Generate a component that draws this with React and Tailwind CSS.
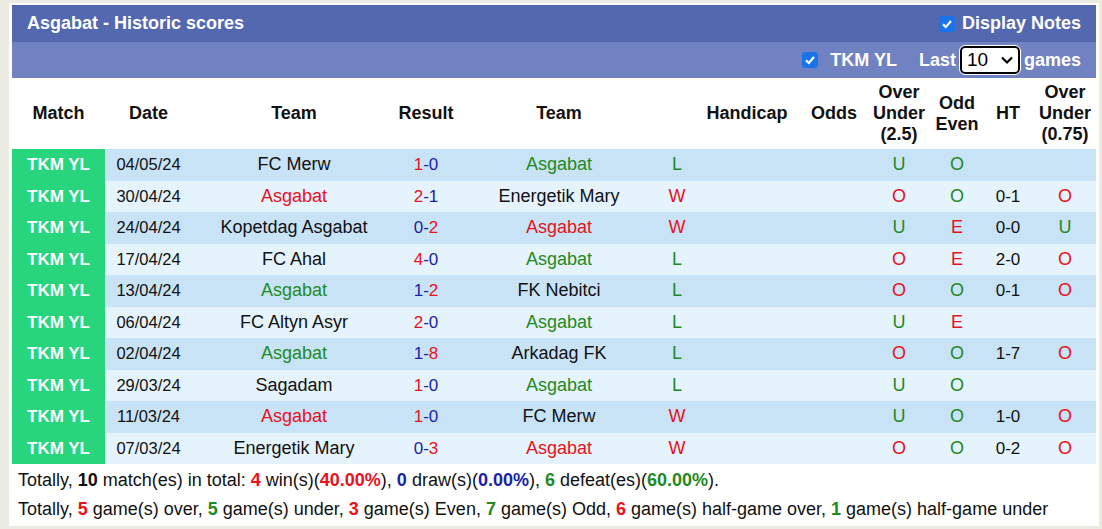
import React from 'react';

const RED = 'text-[#e8121c]';
const GREEN = 'text-[#1f8a24]';
const BLUE = 'text-[#1a22a8]';

// [date, home, homeColor, hs, as, away, awayColor, res, ou, oe, ht, ou2]
const rows = [
  ['04/05/24', 'FC Merw', 'k', 1, 0, 'Asgabat', 'g', 'L', 'U', 'O', '', ''],
  ['30/04/24', 'Asgabat', 'r', 2, 1, 'Energetik Mary', 'k', 'W', 'O', 'O', '0-1', 'O'],
  ['24/04/24', 'Kopetdag Asgabat', 'k', 0, 2, 'Asgabat', 'r', 'W', 'U', 'E', '0-0', 'U'],
  ['17/04/24', 'FC Ahal', 'k', 4, 0, 'Asgabat', 'g', 'L', 'O', 'E', '2-0', 'O'],
  ['13/04/24', 'Asgabat', 'g', 1, 2, 'FK Nebitci', 'k', 'L', 'O', 'O', '0-1', 'O'],
  ['06/04/24', 'FC Altyn Asyr', 'k', 2, 0, 'Asgabat', 'g', 'L', 'U', 'E', '', ''],
  ['02/04/24', 'Asgabat', 'g', 1, 8, 'Arkadag FK', 'k', 'L', 'O', 'O', '1-7', 'O'],
  ['29/03/24', 'Sagadam', 'k', 1, 0, 'Asgabat', 'g', 'L', 'U', 'O', '', ''],
  ['11/03/24', 'Asgabat', 'r', 1, 0, 'FC Merw', 'k', 'W', 'U', 'O', '1-0', 'O'],
  ['07/03/24', 'Energetik Mary', 'k', 0, 3, 'Asgabat', 'r', 'W', 'O', 'O', '0-2', 'O'],
];

const teamColor = { k: 'text-[#111]', r: RED, g: GREEN };

function Check() {
  return (
    <span className="inline-flex shrink-0 w-[16px] h-[16px] rounded-[3px] bg-[#1a73e8] items-center justify-center">
      <svg width="12" height="12" viewBox="0 0 12 12">
        <path d="M2 6.4 L4.8 9 L10 3" stroke="white" strokeWidth="2.2" fill="none" />
      </svg>
    </span>
  );
}

function Score({ h, a }) {
  const hc = h > a ? RED : BLUE;
  const ac = a > h ? RED : BLUE;
  return (
    <span>
      <span className={hc}>{h}</span>
      <span className={BLUE}>-</span>
      <span className={ac}>{a}</span>
    </span>
  );
}

export default function App() {
  return (
    <div className="w-full h-[529px] bg-[#ebebe3] pl-[9px] pt-[3px] font-['Liberation_Sans',Arial,sans-serif]">
      <div className="w-[1090px] bg-white px-[3px] pt-[2px] pb-[2px]">
        {/* title bar */}
        <div className="h-[37px] bg-[#5468b0] flex items-center justify-between pl-[15px] pr-[15px] text-white font-bold text-[18px]">
          <span>Asgabat - Historic scores</span>
          <span className="flex items-center gap-[7px]">
            <Check />
            Display Notes
          </span>
        </div>
        {/* filter bar */}
        <div className="h-[36px] bg-[#7182c2] flex items-center justify-end pr-[15px] text-white font-bold text-[18px]">
          <Check />
          <span className="ml-[12px]">TKM YL</span>
          <span className="ml-[22px]">Last</span>
          <span className="ml-[4px] h-[28px] w-[60px] border-2 border-black rounded-[5px] bg-white text-black font-normal flex items-center pl-[5px] pr-[4px] justify-between outline outline-1 outline-white">
            <span className="text-[19px]">10</span>
            <svg width="14" height="10" viewBox="0 0 14 10">
              <path d="M2 2.5 L7 7.5 L12 2.5" stroke="black" strokeWidth="2.2" fill="none" />
            </svg>
          </span>
          <span className="ml-[4px]">games</span>
        </div>

        <table className="w-[1084px] table-fixed border-collapse text-[17px] text-[#111]">
          <colgroup>
            <col className="w-[93px]" />
            <col className="w-[87px]" />
            <col className="w-[204px]" />
            <col className="w-[60px]" />
            <col className="w-[206px]" />
            <col className="w-[30px]" />
            <col className="w-[110px]" />
            <col className="w-[64px]" />
            <col className="w-[66px]" />
            <col className="w-[50px]" />
            <col className="w-[52px]" />
            <col className="w-[62px]" />
          </colgroup>
          <thead>
            <tr className="h-[71px] font-bold text-[18px] leading-[21px]">
              <th>Match</th>
              <th>Date</th>
              <th>Team</th>
              <th>Result</th>
              <th>Team</th>
              <th></th>
              <th>Handicap</th>
              <th>Odds</th>
              <th>Over<br />Under<br />(2.5)</th>
              <th>Odd<br />Even</th>
              <th>HT</th>
              <th>Over<br />Under<br />(0.75)</th>
            </tr>
          </thead>
          <tbody>
            {rows.map((r, i) => (
              <tr key={i} className={`h-[31.5px] ${i % 2 === 0 ? 'bg-[#c8e3f6]' : 'bg-[#e5f3fc]'}`}>
                <td className="bg-[#28d47c] text-white font-bold text-center">TKM YL</td>
                <td className="text-center text-[16.5px]">{r[0]}</td>
                <td className={`text-center text-[18px] ${teamColor[r[2]]}`}>{r[1]}</td>
                <td className="text-center text-[17px]"><Score h={r[3]} a={r[4]} /></td>
                <td className={`text-center text-[18px] ${teamColor[r[6]]}`}>{r[5]}</td>
                <td className={`text-center text-[18px] ${r[7] === 'W' ? RED : GREEN}`}>{r[7]}</td>
                <td></td>
                <td></td>
                <td className={`text-center text-[18px] ${r[8] === 'U' ? GREEN : RED}`}>{r[8]}</td>
                <td className={`text-center text-[18px] ${r[9] === 'O' ? GREEN : RED}`}>{r[9]}</td>
                <td className="text-center text-[17px]">{r[10]}</td>
                <td className={`text-center text-[18px] ${r[11] === 'U' ? GREEN : RED}`}>{r[11]}</td>
              </tr>
            ))}
          </tbody>
        </table>

        <div className="text-[18px] text-[#111] pl-[6px] pt-[2px]">
          <div className="h-[29px] flex items-center">
            <span>
              Totally, <b>10</b> match(es) in total: <b className={RED}>4</b> win(s)(<b className={RED}>40.00%</b>), <b className={BLUE}>0</b> draw(s)(<b className={BLUE}>0.00%</b>), <b className={GREEN}>6</b> defeat(es)(<b className={GREEN}>60.00%</b>).
            </span>
          </div>
          <div className="h-[29px] flex items-center">
            <span>
              Totally, <b className={RED}>5</b> game(s) over, <b className={GREEN}>5</b> game(s) under, <b className={RED}>3</b> game(s) Even, <b className={GREEN}>7</b> game(s) Odd, <b className={RED}>6</b> game(s) half-game over, <b className={GREEN}>1</b> game(s) half-game under
            </span>
          </div>
        </div>
      </div>
    </div>
  );
}
